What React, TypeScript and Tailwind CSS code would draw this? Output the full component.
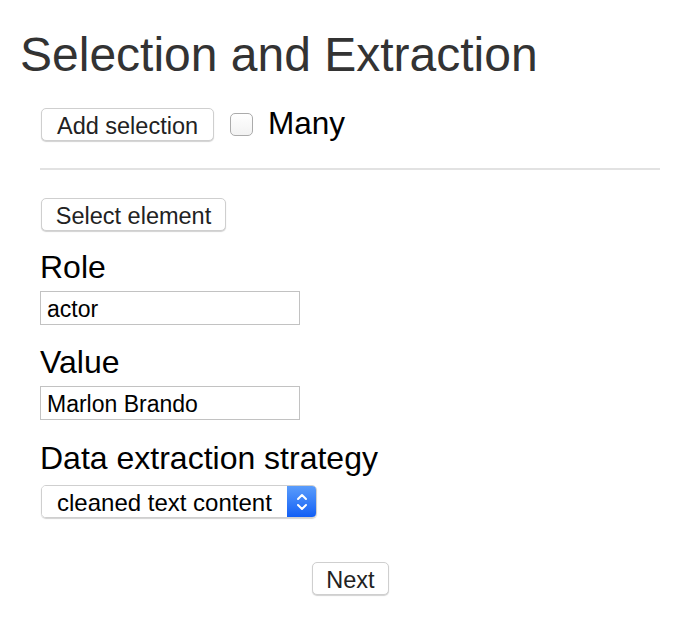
import React from "react";

const Btn = ({ children, className = "" }: { children: React.ReactNode; className?: string }) => (
  <button
    className={`flex h-[33px] items-center justify-center rounded-[5px] border border-[#cfcfcf] bg-white pt-[4px] text-[23.5px] text-[#222] shadow-[0_1px_1px_rgba(0,0,0,0.18)] ${className}`}
  >
    {children}
  </button>
);

const Field = ({ label, value }: { label: string; value: string }) => (
  <div className="flex flex-col">
    <label className="text-[32px] leading-[34px] text-black">{label}</label>
    <input
      readOnly
      value={value}
      className="mt-[7px] h-[34px] w-[260px] border border-[#c2c2c2] bg-white px-[6px] pt-[2px] text-[23px] text-black outline-none"
    />
  </div>
);

export default function App() {
  return (
    <div className="h-[626px] w-[700px] bg-white font-['Liberation_Sans',Arial,sans-serif]">
      <h1 className="pl-[20px] pt-[27px] text-[48px] leading-[55px] text-[#333]">Selection and Extraction</h1>

      <div className="ml-[40px] w-[620px]">
        {/* selection row */}
        <div className="mt-[26px] flex items-center pl-px">
          <Btn className="w-[173px]">Add selection</Btn>
          <span className="ml-[16px] h-[23px] w-[23px] rounded-[5px] border border-[#ababab] bg-gradient-to-b from-white to-[#f2f2f2]" />
          <span className="ml-[15px] -mt-[3px] text-[31.5px] leading-[34px] text-black">Many</span>
        </div>

        <hr className="mt-[27px] border-0 border-t-2 border-[#e2e2e2]" />

        <div className="mt-[28px] pl-px">
          <Btn className="w-[185px]">Select element</Btn>
        </div>

        <div className="mt-[19px] flex flex-col gap-[20px]">
          <Field label="Role" value="actor" />
          <Field label="Value" value="Marlon Brando" />
        </div>

        <div className="mt-[21px] flex flex-col">
          <label className="text-[32px] leading-[34px] text-black">Data extraction strategy</label>
          <div className="ml-px mt-[10px] flex h-[33px] w-[276px] overflow-hidden rounded-[5px] border border-[#cfcfcf] shadow-[0_1px_1px_rgba(0,0,0,0.18)]">
            <div className="flex flex-1 items-center bg-white pl-[15px] pt-[2px] text-[24px] text-black">cleaned text content</div>
            <div className="flex w-[29px] items-center justify-center bg-gradient-to-b from-[#5a9cfb] to-[#105ef5]">
              <svg width="12" height="20" viewBox="0 0 12 20" fill="none" stroke="white" strokeWidth="2" strokeLinecap="round" strokeLinejoin="round">
                <path d="M2 7 L6 3 L10 7" />
                <path d="M2 13 L6 17 L10 13" />
              </svg>
            </div>
          </div>
        </div>
      </div>

      <div className="mt-[44px] flex justify-center pl-px">
        <Btn className="w-[77px]">Next</Btn>
      </div>
    </div>
  );
}
